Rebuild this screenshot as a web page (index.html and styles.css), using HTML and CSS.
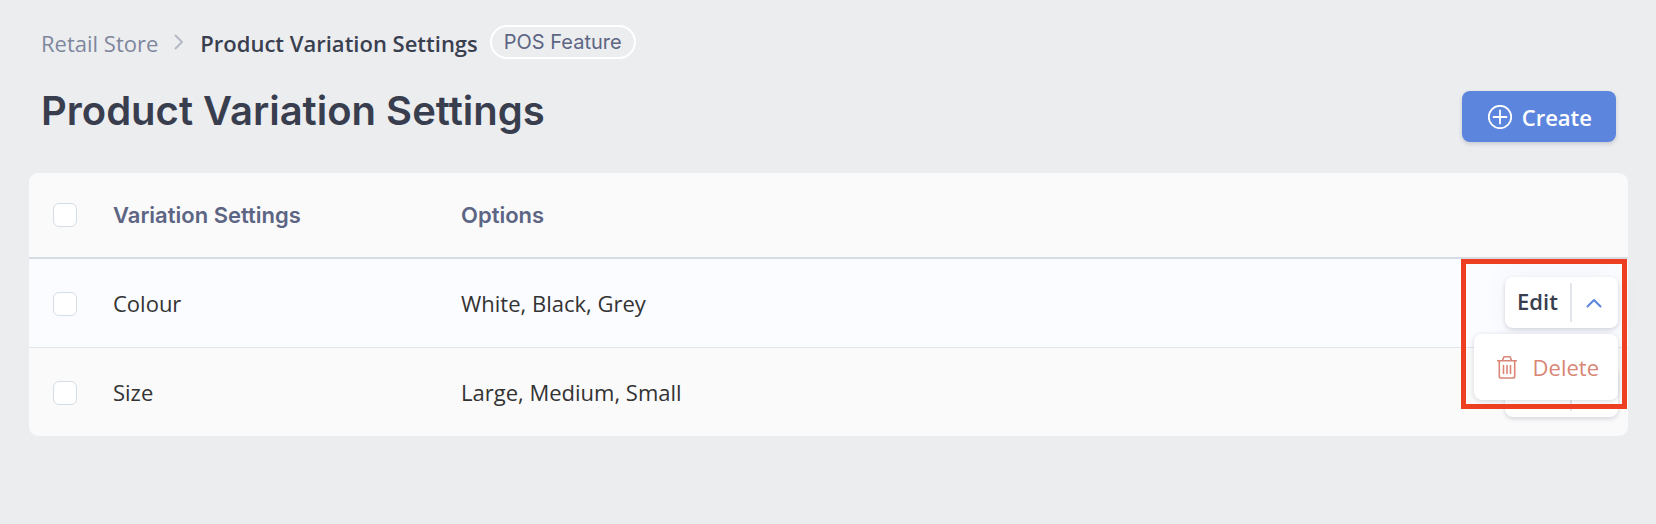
FILE: index.html
```html
<!DOCTYPE html>
<html lang="en">
<head>
<meta charset="utf-8">
<meta name="viewport" content="width=device-width, initial-scale=1">
<title>Product Variation Settings</title>
<link rel="stylesheet" href="styles.css">
</head>
<body>
<main class="page">
  <header class="page-header">
    <nav class="breadcrumb" aria-label="Breadcrumb">
      <a class="crumb-link" href="#">Retail Store</a>
      <svg class="crumb-arrow" viewBox="0 0 10 16" aria-hidden="true"><path d="M1.5 1.5 8 8l-6.500 6.500"/></svg>
      <span class="crumb-current">Product Variation Settings</span>
      <span class="badge">POS Feature</span>
    </nav>
    <div class="title-row">
      <h1 class="title">Product Variation Settings</h1>
      <button class="create-button" type="button">
        <svg class="create-icon" viewBox="0 0 24 24" aria-hidden="true"><circle cx="12" cy="12" r="11.200"/><path d="M12 5.500v13M5.500 12h13"/></svg>
        Create
      </button>
    </div>
  </header>

  <table class="settings-table">
    <thead>
      <tr>
        <th class="check-cell"><input class="checkbox" type="checkbox" aria-label="Select all"></th>
        <th class="name-cell" scope="col">Variation Settings</th>
        <th class="options-cell" scope="col">Options</th>
        <th class="action-cell"></th>
      </tr>
    </thead>
    <tbody>
      <tr class="row-active">
        <td class="check-cell"><input class="checkbox" type="checkbox" aria-label="Select Colour"></td>
        <td class="name-cell">Colour</td>
        <td class="options-cell">White, Black, Grey</td>
        <td class="action-cell">
          <div class="split open">
            <button class="edit-button" type="button">Edit</button>
            <button class="toggle-button" type="button" aria-label="Hide actions" aria-expanded="true">
              <svg class="toggle-icon" viewBox="0 0 16 10" aria-hidden="true"><path d="M1.500 8.500 8 2l6.500 6.500"/></svg>
            </button>
            <div class="menu">
              <button class="delete-button" type="button">
                <svg class="trash-icon" viewBox="0 0 20 23" aria-hidden="true"><path d="M.7 4.800h18.600M5.500 4.500 6.600 1.500Q6.800.8 7.600.8h4.800q.8 0 1 .7l1.100 3M2.300 5v15.200q0 1.800 1.800 1.800h11.800q1.800 0 1.800-1.800V5M6.500 9.500v8M10 9.500v8M13.500 9.500v8"/></svg>
                Delete
              </button>
            </div>
            <div class="highlight"></div>
          </div>
        </td>
      </tr>
      <tr>
        <td class="check-cell"><input class="checkbox" type="checkbox" aria-label="Select Size"></td>
        <td class="name-cell">Size</td>
        <td class="options-cell">Large, Medium, Small</td>
        <td class="action-cell">
          <div class="split">
            <button class="edit-button" type="button">Edit</button>
            <button class="toggle-button" type="button" aria-label="Show actions" aria-expanded="false">
              <svg class="toggle-icon" viewBox="0 0 16 10" aria-hidden="true"><path d="M1.500 1.500 8 8l6.500-6.500"/></svg>
            </button>
          </div>
        </td>
      </tr>
    </tbody>
  </table>
</main>
</body>
</html>
```
FILE: styles.css
```css
* {
  box-sizing: border-box;
}

body {
  margin: 0;
  background: #ecedef;
  color: #333;
  font: 22px/32px "Open Sans", "Noto Sans", sans-serif;
}

button {
  margin: 0;
  padding: 0;
  border: 0;
  background: none;
  color: inherit;
  font: inherit;
  cursor: pointer;
}

svg {
  display: block;
  flex: none;
  fill: none;
  stroke: currentColor;
  stroke-linecap: round;
  stroke-linejoin: round;
}

.page {
  padding: 25px 28px 48px 29px;
}

.page-header {
  padding: 0 12px;
}

.breadcrumb {
  display: flex;
  align-items: center;
}

.crumb-link {
  padding-top: 2px;
  color: #7e879d;
  text-decoration: none;
}

.crumb-arrow {
  width: 10px;
  height: 16px;
  margin: 0 16px;
  color: #b4bac8;
  stroke-width: 2;
}

.crumb-current {
  padding-top: 2px;
  color: #3a3f50;
  font-weight: 600;
}

.badge {
  margin-left: 12px;
  padding: 0 12px;
  border: 2px solid #fff;
  border-radius: 17px;
  color: #5c6583;
  font: 20px/30px Inter, sans-serif;
}

.title-row {
  display: flex;
  justify-content: space-between;
  align-items: flex-end;
  margin-top: 20px;
}

.title {
  margin: 0;
  color: #393e4f;
  font: 600 40px/63px Inter, sans-serif;
}

.create-button {
  display: flex;
  align-items: center;
  gap: 10px;
  height: 51px;
  padding: 0 24px 0 26px;
  border-radius: 8px;
  background: #5c86de;
  box-shadow: 0 2px 4px rgba(50, 60, 90, 0.2);
  color: #fff;
  font-weight: 600;
}

.create-icon {
  width: 24px;
  height: 24px;
  stroke-width: 1.8;
}

.settings-table {
  width: 100%;
  margin-top: 31px;
  border-collapse: separate;
  border-spacing: 0;
  border-radius: 9px;
  background: #fafafa;
  table-layout: fixed;
}

th,
td {
  height: 88px;
  padding: 0;
  text-align: left;
  vertical-align: middle;
}

th {
  height: 86px;
  border-bottom: 2px solid #d5dce4;
  color: #5c6583;
  font: 600 22px/32px Inter, sans-serif;
}

.row-active td {
  height: 89px;
  border-bottom: 1px solid #e2e7ed;
  background: #fbfcff;
}

.check-cell {
  width: 84px;
  padding-left: 24px;
}

td.check-cell {
  padding-top: 2px;
}

.name-cell {
  width: 348px;
}

.action-cell {
  width: 180px;
  padding-right: 10px;
  padding-bottom: 1px;
}

.checkbox {
  display: block;
  width: 24px;
  height: 24px;
  margin: 0;
  border: 1px solid #d5dde6;
  border-radius: 6px;
  background: #fff;
  appearance: none;
}

.split {
  position: relative;
  display: flex;
  align-items: center;
  width: 113px;
  height: 51px;
  margin-left: auto;
  border-radius: 8px;
  background: #fff;
  box-shadow: 0 2px 4px rgba(50, 60, 90, 0.18);
}

.open {
  z-index: 1;
}

.row-active .split {
  box-shadow: 0 2px 4px rgba(50, 60, 90, 0.18), 0 0 26px rgba(60, 80, 140, 0.06);
}

.edit-button {
  flex: 1;
  height: 39px;
  padding-bottom: 3px;
  border-right: 2px solid #e2e6ec;
  color: #393e4f;
  font-weight: 600;
}

.toggle-button {
  display: grid;
  place-items: center;
  width: 46px;
  height: 51px;
  padding-right: 2px;
  color: #5c86de;
}

.toggle-icon {
  width: 16px;
  height: 10px;
  stroke-width: 2;
}

.menu {
  position: absolute;
  top: 57px;
  right: 0;
  border-radius: 8px;
  background: #fff;
  box-shadow: 0 1px 5px rgba(50, 60, 90, 0.2);
}

.delete-button {
  display: flex;
  align-items: center;
  gap: 16px;
  height: 66px;
  padding: 0 19px 0 23px;
  color: #d98676;
}

.trash-icon {
  width: 20px;
  height: 23px;
  stroke-width: 1.6;
}

.highlight {
  position: absolute;
  top: -18px;
  right: -9px;
  width: 166px;
  height: 150px;
  border: 5px solid #ed4023;
  pointer-events: none;
}
```
